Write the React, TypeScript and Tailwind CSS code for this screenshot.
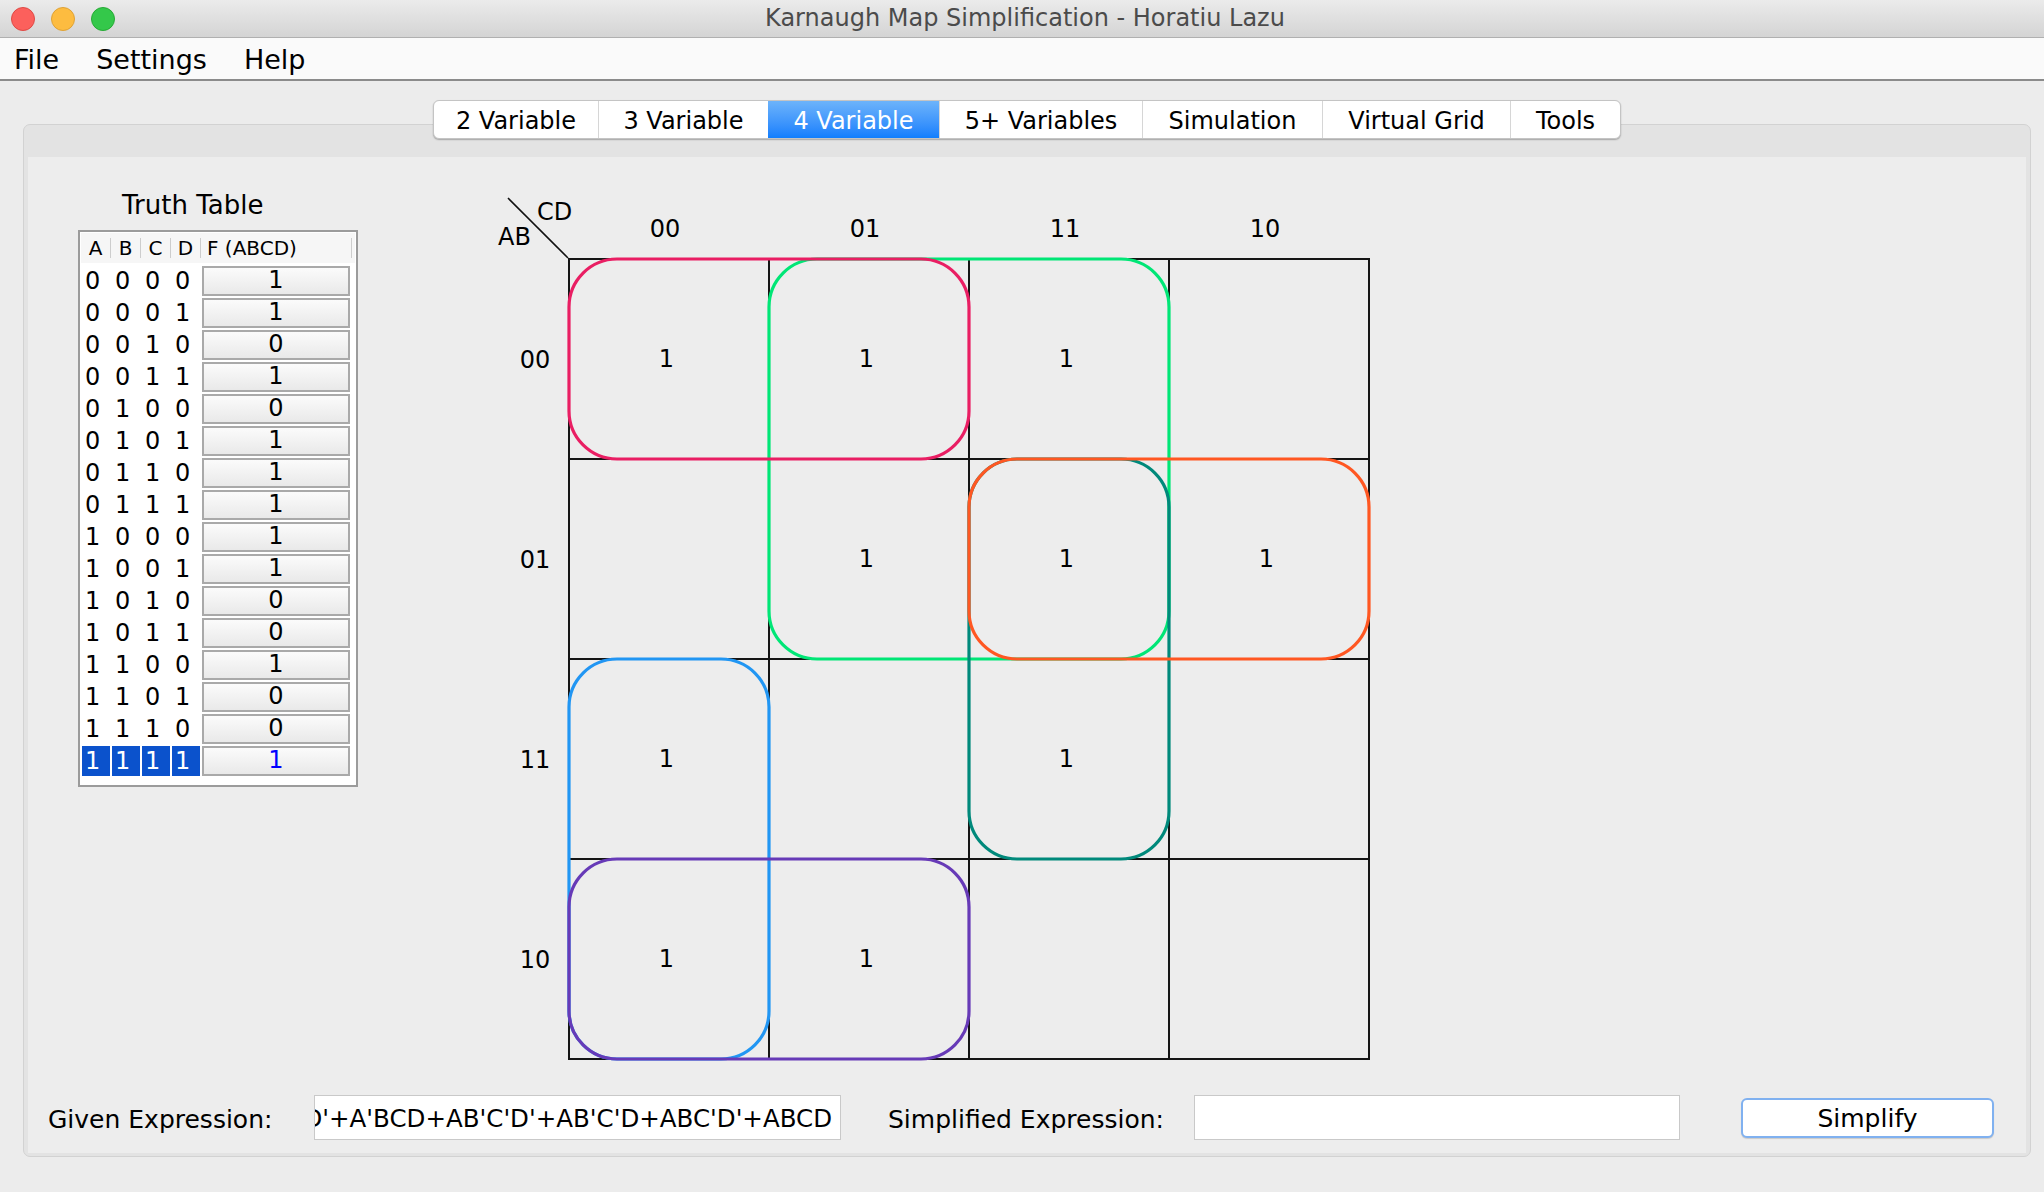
import React from 'react';

const TABS = [
  { label: '2 Variable', w: 'w-[164px]' },
  { label: '3 Variable', w: 'w-[170px]' },
  { label: '4 Variable', w: 'w-[171px]' },
  { label: '5+ Variables', w: 'w-[203px]' },
  { label: 'Simulation', w: 'w-[180px]' },
  { label: 'Virtual Grid', w: 'w-[188px]' },
  { label: 'Tools', w: 'w-[110px]' },
];

// F(ABCD) for minterms 0..15
const F = [1, 1, 0, 1, 0, 1, 1, 1, 1, 1, 0, 0, 1, 0, 0, 1];
const GRAY = ['00', '01', '11', '10'];

const LOOPS = [
  { x: 200, y: 0, w: 400, h: 400, c: '#00e676' },
  { x: 0, y: 0, w: 400, h: 200, c: '#e91e63' },
  { x: 400, y: 200, w: 200, h: 400, c: '#00897b' },
  { x: 400, y: 200, w: 400, h: 200, c: '#ff5722' },
  { x: 0, y: 400, w: 200, h: 400, c: '#2196f3' },
  { x: 0, y: 600, w: 400, h: 200, c: '#673ab7' },
];

const bits = (n: number) => [(n >> 3) & 1, (n >> 2) & 1, (n >> 1) & 1, n & 1];

const TruthTable = () => (
  <div className="ml-[50px] w-[280px] flex flex-col">
    <div className="mt-[33px] ml-[44px] text-[26px] leading-[30px] text-black">Truth Table</div>
    <div className="mt-[10px] w-[280px] border-2 border-[#9b9b9b] bg-white px-[1px] pt-[1px] pb-[8px]">
      {/* header */}
      <div className="flex h-[30px] bg-[#f6f6f6] text-[20px] text-black">
        {['A', 'B', 'C', 'D'].map((h) => (
          <div key={h} className="w-[30px] flex items-center">
            <span className="flex-1 text-center">{h}</span>
            <span className="w-px h-[20px] bg-[#cdcdcd]" />
          </div>
        ))}
        <div className="w-[151px] flex items-center">
          <span className="flex-1 pl-[6px]">F (ABCD)</span>
          <span className="w-px h-[20px] bg-[#cdcdcd]" />
        </div>
      </div>
      <div className="mt-[2px] flex flex-col">
        {F.map((v, i) => {
          const sel = i === 15;
          return (
            <div key={i} className="flex h-[32px] text-[24px] text-black">
              {bits(i).map((b, j) => (
                <div key={j} className="w-[30px] px-[1px] pt-[1px]">
                  <div
                    className={`h-[30px] flex items-center justify-start pl-[3px] leading-none ${
                      sel ? 'bg-[#0b52cc] text-white' : ''
                    }`}
                  >
                    {b}
                  </div>
                </div>
              ))}
              <div className="w-[151px] pl-[1px] pr-[2px] pt-[1px]">
                <div
                  className={`h-[30px] border-2 border-[#a9a9a9] bg-gradient-to-b from-[#fbfbfb] to-[#e9e9e9] flex items-center justify-center leading-none pb-[3px] ${
                    sel ? 'text-[#0000ff]' : ''
                  }`}
                >
                  {v}
                </div>
              </div>
            </div>
          );
        })}
      </div>
    </div>
  </div>
);

const KMap = () => (
  <div className="ml-[142px] mt-[41px] grid grid-cols-[68px_802px] grid-rows-[60px_802px] text-black">
    {/* corner */}
    <div className="relative">
      <svg width="68" height="60" className="block overflow-visible">
        <line x1="8" y1="0" x2="68" y2="60" stroke="#111" strokeWidth="1.6" />
      </svg>
      <span className="absolute left-[37px] top-[1px] text-[24px] leading-[26px]">CD</span>
      <span className="absolute left-[-2px] top-[26px] text-[24px] leading-[26px]">AB</span>
    </div>
    {/* column labels */}
    <div className="flex pl-[2px]">
      {GRAY.map((g) => (
        <div key={g} className="w-[200px] flex items-center justify-center text-[24px] pr-[10px] pt-[2px]">
          {g}
        </div>
      ))}
    </div>
    {/* row labels */}
    <div className="flex flex-col pt-[2px]">
      {GRAY.map((g) => (
        <div key={g} className="h-[200px] flex items-center justify-center text-[24px] pl-[2px]">
          {g}
        </div>
      ))}
    </div>
    {/* map body */}
    <div className="relative border-l-2 border-t-2 border-[#151515] grid grid-cols-[repeat(4,200px)] grid-rows-[repeat(4,200px)]">
      {GRAY.map((ab) =>
        GRAY.map((cd) => {
          const v = F[parseInt(ab + cd, 2)];
          return (
            <div
              key={ab + cd}
              className="border-r-2 border-b-2 border-[#151515] flex items-center justify-center text-[24px] pr-[5px]"
            >
              {v ? '1' : ''}
            </div>
          );
        })
      )}
      <svg
        width="800"
        height="800"
        viewBox="0 0 800 800"
        className="absolute left-[-1px] top-[-1px] overflow-visible pointer-events-none"
      >
        {LOOPS.map((l, i) => (
          <rect
            key={i}
            x={l.x}
            y={l.y}
            width={l.w}
            height={l.h}
            rx="48"
            ry="48"
            fill="none"
            stroke={l.c}
            strokeWidth="3.2"
          />
        ))}
      </svg>
    </div>
  </div>
);

const App: React.FC = () => {
  // tail of the full expression that fits in the field
  const given = "CD'+A'BCD+AB'C'D'+AB'C'D+ABC'D'+ABCD";

  return (
    <div className="w-[2044px] h-[1192px] overflow-hidden bg-[#ececec] font-['DejaVu_Sans',sans-serif] flex flex-col">
      {/* Title bar */}
      <div className="h-[38px] shrink-0 bg-gradient-to-b from-[#ebebeb] to-[#d4d4d4] border-b border-[#b0b0b0] grid grid-cols-[1fr_auto_1fr] items-center">
        <div className="flex items-center gap-[16px] pl-[11px]">
          <span className="w-[24px] h-[24px] rounded-full bg-[#fc605c] border border-[#de4a45]" />
          <span className="w-[24px] h-[24px] rounded-full bg-[#fdbc40] border border-[#dea236]" />
          <span className="w-[24px] h-[24px] rounded-full bg-[#34c84a] border border-[#27aa35]" />
        </div>
        <div className="text-[24px] leading-none text-[#4b4b4b] pl-[6px] pb-[2px]">
          Karnaugh Map Simplification - Horatiu Lazu
        </div>
        <div />
      </div>

      {/* Menu bar */}
      <div className="h-[43px] shrink-0 bg-[#fafafa] border-b-2 border-[#8b8b8b] flex items-center gap-[37px] pl-[14px] pt-[4px] text-[27px] text-black">
        <span>File</span>
        <span>Settings</span>
        <span>Help</span>
      </div>

      {/* Body */}
      <div className="pl-[23px] pr-[13px] pt-[19px] flex flex-col">
        {/* Tabs */}
        <div className="relative z-10 flex justify-center">
          <div className="flex h-[39px] rounded-[6px] border border-[#c4c4c4] bg-white shadow-[0_1px_1.5px_rgba(0,0,0,0.28)] overflow-hidden text-[24px]">
            {TABS.map((t, i) => {
              const active = t.label === '4 Variable';
              return (
                <div
                  key={t.label}
                  className={`${t.w} flex items-center justify-center pt-[2px] ${
                    i > 0 ? 'border-l border-[#d6d6d6]' : ''
                  } ${
                    active
                      ? 'bg-gradient-to-b from-[#6cb3fa] to-[#0f7efd] text-white border-l-0'
                      : 'text-black'
                  }`}
                >
                  {t.label}
                </div>
              );
            })}
          </div>
        </div>

        {/* Panel */}
        <div className="-mt-[15px] rounded-[7px] border border-[#d2d2d2] bg-[#e3e3e3] pt-[32px] px-[4px] pb-[3px]">
          <div className="bg-[#ededed] flex flex-col">
            <div className="flex">
              <TruthTable />
              <KMap />
            </div>

            {/* Expression row */}
            <div className="mt-[35px] mb-[13px] flex items-center h-[45px] text-[25px] text-black">
              <span className="ml-[20px] w-[266px] shrink-0 pt-[4px]">Given Expression:</span>
              <div className="w-[527px] h-[45px] shrink-0 bg-white border border-[#c9c9c9] flex items-center justify-end overflow-hidden pr-[8px] pt-[4px] text-[24.5px]">
                <span className="whitespace-nowrap shrink-0">{given}</span>
              </div>
              <span className="ml-[47px] w-[306px] shrink-0 pt-[4px]">Simplified Expression:</span>
              <div className="w-[486px] h-[45px] shrink-0 bg-white border border-[#c9c9c9]" />
              <button className="ml-[61px] w-[253px] h-[40px] shrink-0 rounded-[6px] border-2 border-[#80b1f0] bg-white shadow-[0_1px_1px_rgba(0,0,0,0.15)] text-[25px] text-black">
                Simplify
              </button>
            </div>
          </div>
        </div>
      </div>
    </div>
  );
};

export default App;
